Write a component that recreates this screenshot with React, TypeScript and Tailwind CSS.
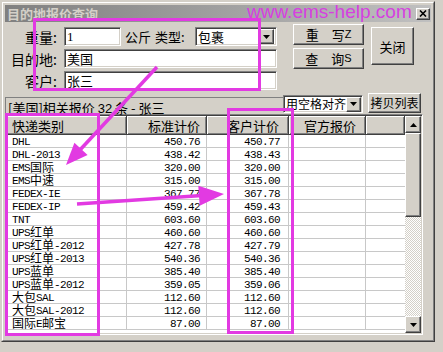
import React from 'react';

const raised =
  'border border-t-white border-l-white border-r-[#404040] border-b-[#404040] shadow-[inset_-1px_-1px_0_#808080] bg-[#d4d0c8]';
const sunken =
  'border border-t-[#808080] border-l-[#808080] border-r-white border-b-white shadow-[inset_1px_1px_0_#404040,inset_-1px_-1px_0_#d4d0c8]';

const rows: [string, string, string][] = [
  ['DHL', '450.76', '450.77'],
  ['DHL-2013', '438.42', '438.43'],
  ['EMS国际', '320.00', '320.00'],
  ['EMS中速', '315.00', '315.00'],
  ['FEDEX-IE', '367.77', '367.78'],
  ['FEDEX-IP', '459.42', '459.43'],
  ['TNT', '603.60', '603.60'],
  ['UPS红单', '460.60', '460.60'],
  ['UPS红单-2012', '427.78', '427.79'],
  ['UPS红单-2013', '540.36', '540.36'],
  ['UPS蓝单', '385.40', '385.40'],
  ['UPS蓝单-2012', '359.05', '359.06'],
  ['大包SAL', '112.60', '112.60'],
  ['大包SAL-2012', '112.60', '112.60'],
  ['国际E邮宝', '87.00', '87.00'],
];

// SimSun-ish: latin half width, CJK full width
function Mixed({ text }: { text: string }) {
  const parts = text.match(/[\x00-\x7f]+|[^\x00-\x7f]+/g) ?? [];
  return (
    <>
      {parts.map((p, i) =>
        /^[\x00-\x7f]/.test(p) ? (
          <span key={i} className="font-['Liberation_Mono',monospace] text-[11px] leading-[0] tracking-[-0.6px] align-[1px]">
            {p}
          </span>
        ) : (
          <span key={i}>{p}</span>
        )
      )}
    </>
  );
}

function Arrow({ dir }: { dir: 'up' | 'down' }) {
  return (
    <svg width="7" height="4" viewBox="0 0 7 4">
      <polygon points={dir === 'down' ? '0,0 7,0 3.5,4' : '0,4 7,4 3.5,0'} fill="#000" />
    </svg>
  );
}

function DropButton() {
  return (
    <div className={`${raised} w-[15px] h-[15px] flex items-center justify-center shrink-0`}>
      <Arrow dir="down" />
    </div>
  );
}

const headCell =
  'flex items-center bg-[#d4d0c8] border-r border-b border-[#404040] shadow-[inset_1px_1px_0_#fff,inset_-1px_-1px_0_#808080]';
const cell = 'h-[13px] border-r border-b border-[#c8c8c8]';

export default function App() {
  return (
    <div className="relative w-[443px] h-[352px] overflow-hidden bg-[#d4d0c8] pl-px pt-px font-['Noto_Sans_CJK_SC',sans-serif] text-black">
      {/* window frame */}
      <div className="w-[434px] h-[341px] border border-t-[#d4d0c8] border-l-[#d4d0c8] border-r-[#404040] border-b-[#404040]">
        <div className="h-full border border-t-white border-l-white border-r-[#808080] border-b-[#808080] p-[2px]">
          {/* title bar */}
          <div className="h-[17px] flex items-center justify-between bg-linear-to-r from-[#808080] to-[#c0c0c0] pl-[2px] pr-[1px]">
            <span className="text-[13px] font-bold leading-none text-[#d4d0c8]">目的地报价查询</span>
            <div className={`${raised} w-[14px] h-[12px] flex items-center justify-center`}>
              <svg width="8" height="7" viewBox="0 0 8 7">
                <path d="M1 0.5 L7 6.5 M7 0.5 L1 6.5" stroke="#000" strokeWidth="1.6" />
              </svg>
            </div>
          </div>

          {/* form */}
          <div className="flex items-start text-[13px] leading-none whitespace-nowrap">
            <div className="mt-[5px] flex flex-col gap-[3px]">
              <div className="flex items-center h-[19px]">
                <span className="w-[52px] text-right text-[14px]">重量:</span>
                <div className={`${sunken} ml-[7px] w-[57px] h-[19px] bg-white flex items-center pl-[2px] font-['Liberation_Serif',serif]`}>1</div>
                <span className="w-[30px] pl-[4px]">公斤</span>
                <span className="w-[44px] pl-[4px]">类型:</span>
                <div className={`${sunken} w-[82px] h-[19px] bg-white flex items-center pl-[2px] pr-[2px]`}>
                  <span className="flex-1">包裹</span>
                  <DropButton />
                </div>
              </div>
              <div className="flex items-center h-[19px]">
                <span className="w-[52px] text-right text-[14px]">目的地:</span>
                <div className={`${sunken} ml-[7px] w-[213px] h-[19px] bg-white flex items-center pl-[2px]`}>美国</div>
              </div>
              <div className="flex items-center h-[19px]">
                <span className="w-[52px] text-right text-[14px]">客户:</span>
                <div className={`${sunken} ml-[7px] w-[213px] h-[19px] bg-white flex items-center pl-[2px]`}>张三</div>
              </div>
            </div>

            <div className="ml-[16px] mt-[2px] flex flex-col gap-[3px]">
              <div className={`${raised} w-[71px] h-[21px] flex items-center justify-center`}>
                重　写<span className="font-['Liberation_Sans',sans-serif] text-[11px]">Z</span>
              </div>
              <div className={`${raised} w-[71px] h-[21px] flex items-center justify-center`}>
                查　询<span className="font-['Liberation_Sans',sans-serif] text-[11px]">S</span>
              </div>
            </div>

            <div className={`${raised} ml-[7px] mt-[5px] w-[43px] h-[38px] flex items-center justify-center`}>
              关闭
            </div>
          </div>

          {/* list caption row */}
          <div className="mt-[3px] flex items-start h-[20px] text-[12px] leading-none whitespace-nowrap">
            <div className="w-[278px] mt-[4px] h-[16px] border-t border-l border-[#808080] pl-[2px] pt-[3px] text-[13px]">
              [美国]相关报价 <span className="font-['Liberation_Sans',sans-serif]">32</span> 条 - 张三
            </div>
            <div className={`${sunken} mt-[2px] w-[80px] h-[18px] bg-white flex items-center pl-[2px] pr-[1px]`}>
              <span className="flex-1">用空格对齐</span>
              <DropButton />
            </div>
            <div className={`${raised} ml-[5px] w-[53px] h-[20px] flex items-center justify-center`}>拷贝列表</div>
          </div>

          {/* grid */}
          <div className={`${sunken} mt-[1px] w-[418px] h-[221px] bg-white flex p-px`}>
            <div className="w-[398px] flex flex-col">
              <div className="flex h-[19px] text-[13px] leading-none whitespace-nowrap">
                <div className={`${headCell} w-[120px] pl-[5px]`}>快递类别</div>
                <div className={`${headCell} w-[80px] justify-end pr-[6px]`}>标准计价</div>
                <div className={`${headCell} w-[82px] justify-end pr-[9px]`}>客户计价</div>
                <div className={`${headCell} w-[77px] justify-end pr-[9px]`}>官方报价</div>
                <div className={`${headCell} w-[39px]`} />
              </div>
              {rows.map(([name, std, cust]) => (
                <div key={name} className="flex text-[12px] leading-[12px] whitespace-nowrap">
                  <div className={`${cell} w-[120px] pl-[5px]`}>
                    <Mixed text={name} />
                  </div>
                  <div className={`${cell} w-[80px] pr-[6px] text-right`}>
                    <Mixed text={std} />
                  </div>
                  <div className={`${cell} w-[82px] pr-[8px] text-right`}>
                    <Mixed text={cust} />
                  </div>
                  <div className={`${cell} w-[77px]`} />
                  <div className="h-[13px] w-[39px] border-b border-[#c8c8c8]" />
                </div>
              ))}
            </div>

            {/* scrollbar */}
            <div className="w-[16px] flex flex-col">
              <div className={`${raised} h-[17px] flex items-center justify-center`}>
                <Arrow dir="up" />
              </div>
              <div className={`${raised} h-[84px]`} />
              <div className="flex-1 bg-[repeating-conic-gradient(#ffffff_0%_25%,#d4d0c8_0%_50%)] bg-size-[2px_2px]" />
              <div className={`${raised} h-[17px] flex items-center justify-center`}>
                <Arrow dir="down" />
              </div>
            </div>
          </div>
        </div>
      </div>

      {/* annotation overlay */}
      <div className="absolute left-[247px] top-[1px] font-['Liberation_Sans',sans-serif] text-[19px] leading-[22px] text-[#d640e0]">
        www.ems-help.com
      </div>
      <svg className="absolute left-0 top-0 pointer-events-none" width="443" height="352">
        <rect x="34.5" y="19.5" width="225" height="70" fill="none" stroke="#e23ae2" strokeWidth="3" />
        <rect x="6.5" y="114.5" width="92" height="220" fill="none" stroke="#e23ae2" strokeWidth="3" />
        <rect x="228.5" y="109.5" width="64" height="223" fill="none" stroke="#e23ae2" strokeWidth="3" />
        <line x1="157" y1="67" x2="79" y2="151" stroke="#e23ae2" strokeWidth="3.5" />
        <polygon points="66,165 87.6,155 74.4,142.8" fill="#e23ae2" />
        <line x1="77" y1="204" x2="202" y2="195.5" stroke="#e23ae2" strokeWidth="3.5" />
        <polygon points="224,194 199.7,205.7 198.3,185.7" fill="#e23ae2" />
      </svg>
    </div>
  );
}
